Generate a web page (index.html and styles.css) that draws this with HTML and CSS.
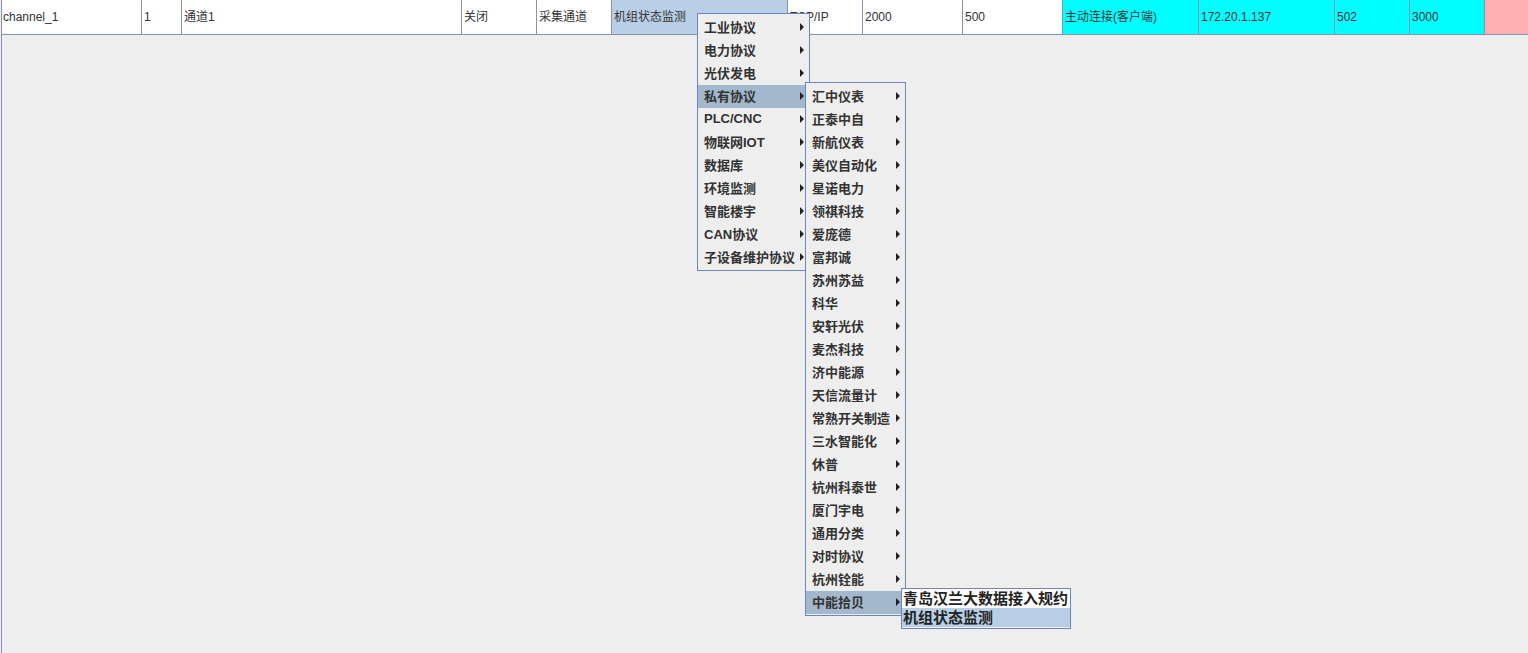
FILE: index.html
```html
<!DOCTYPE html>
<html lang="zh-CN">
<head>
    <meta charset="UTF-8">
    <title>通道配置</title>
    <link rel="stylesheet" href="styles.css">
</head>
<body>
    <div class="viewport">
        <div class="row">
            <div class="cell cell-first">channel_1</div>
            <div class="cell">1</div>
            <div class="cell">通道1</div>
            <div class="cell">关闭</div>
            <div class="cell">采集通道</div>
            <div class="cell cell-selected">机组状态监测</div>
            <div class="cell">TCP/IP</div>
            <div class="cell">2000</div>
            <div class="cell">500</div>
            <div class="cell cell-cyan">主动连接(客户端)</div>
            <div class="cell cell-cyan">172.20.1.137</div>
            <div class="cell cell-cyan">502</div>
            <div class="cell cell-cyan">3000</div>
            <div class="cell cell-pink"></div>
        </div>
    </div>

    <!-- 协议类别 -->
    <div class="popup menu-main">
        <div class="menu-item"><span>工业协议</span><i class="arrow"></i></div>
        <div class="menu-item"><span>电力协议</span><i class="arrow"></i></div>
        <div class="menu-item"><span>光伏发电</span><i class="arrow"></i></div>
        <div class="menu-item is-active"><span>私有协议</span><i class="arrow"></i></div>
        <div class="menu-item"><span>PLC/CNC</span><i class="arrow"></i></div>
        <div class="menu-item"><span>物联网IOT</span><i class="arrow"></i></div>
        <div class="menu-item"><span>数据库</span><i class="arrow"></i></div>
        <div class="menu-item"><span>环境监测</span><i class="arrow"></i></div>
        <div class="menu-item"><span>智能楼宇</span><i class="arrow"></i></div>
        <div class="menu-item"><span>CAN协议</span><i class="arrow"></i></div>
        <div class="menu-item"><span>子设备维护协议</span><i class="arrow"></i></div>
    </div>

    <!-- 厂家 -->
    <div class="popup menu-vendor">
        <div class="menu-item"><span>汇中仪表</span><i class="arrow"></i></div>
        <div class="menu-item"><span>正泰中自</span><i class="arrow"></i></div>
        <div class="menu-item"><span>新航仪表</span><i class="arrow"></i></div>
        <div class="menu-item"><span>美仪自动化</span><i class="arrow"></i></div>
        <div class="menu-item"><span>星诺电力</span><i class="arrow"></i></div>
        <div class="menu-item"><span>领祺科技</span><i class="arrow"></i></div>
        <div class="menu-item"><span>爱庞德</span><i class="arrow"></i></div>
        <div class="menu-item"><span>富邦诚</span><i class="arrow"></i></div>
        <div class="menu-item"><span>苏州苏益</span><i class="arrow"></i></div>
        <div class="menu-item"><span>科华</span><i class="arrow"></i></div>
        <div class="menu-item"><span>安轩光伏</span><i class="arrow"></i></div>
        <div class="menu-item"><span>麦杰科技</span><i class="arrow"></i></div>
        <div class="menu-item"><span>济中能源</span><i class="arrow"></i></div>
        <div class="menu-item"><span>天信流量计</span><i class="arrow"></i></div>
        <div class="menu-item"><span>常熟开关制造</span><i class="arrow"></i></div>
        <div class="menu-item"><span>三水智能化</span><i class="arrow"></i></div>
        <div class="menu-item"><span>休普</span><i class="arrow"></i></div>
        <div class="menu-item"><span>杭州科泰世</span><i class="arrow"></i></div>
        <div class="menu-item"><span>厦门宇电</span><i class="arrow"></i></div>
        <div class="menu-item"><span>通用分类</span><i class="arrow"></i></div>
        <div class="menu-item"><span>对时协议</span><i class="arrow"></i></div>
        <div class="menu-item"><span>杭州铨能</span><i class="arrow"></i></div>
        <div class="menu-item is-active"><span>中能拾贝</span><i class="arrow"></i></div>
    </div>

    <!-- 规约 -->
    <div class="popup menu-protocol">
        <div class="list-item">青岛汉兰大数据接入规约</div>
        <div class="list-item is-selected">机组状态监测</div>
    </div>
</body>
</html>
```

FILE: styles.css
```css
* {
    box-sizing: border-box;
}
body {
    margin: 0;
    height: 653px;
    overflow: hidden;
    background-color: #eeeeee;
    font-family: "Liberation Sans", Arial, "Noto Sans CJK SC", sans-serif;
    color: #333;
}
.viewport {
    margin-left: 1px;
    height: 653px;
    border-left: 1px solid #8594ae;
}
.row {
    display: grid;
    grid-template-columns: 140px 40px 280px 75px 75px 176px 75px 100px 100px 136px 136px 75px 75px 1fr;
    height: 35px;
    border-bottom: 1px solid #8594ae;
}
.cell {
    background: #fff;
    border-right: 1px solid #8594ae;
    padding-left: 2px;
    font-size: 12px;
    line-height: 34px;
    white-space: nowrap;
    overflow: hidden;
}
.cell-first {
    padding-left: 1px;
}
.cell-selected {
    background: #b8cfe5;
}
.cell-cyan {
    background: #00ffff;
}
.cell-pink {
    background: #ffafaf;
    border-right: none;
}

/* popup menus */
.popup {
    position: absolute;
    background: #eeeeee;
    border: 1px solid #6a86bf;
    padding: 2px 0 1px;
}
.menu-main {
    left: 697px;
    top: 13px;
    width: 113px;
}
.menu-vendor {
    left: 805px;
    top: 82px;
    width: 101px;
}
.menu-item {
    display: flex;
    align-items: center;
    justify-content: space-between;
    height: 23px;
    padding: 0 5px 2px 6px;
    font-size: 13px;
    font-weight: bold;
    white-space: nowrap;
}
.menu-item.is-active {
    background: #a3b8cc;
}
.arrow {
    width: 0;
    height: 0;
    border-left: 4px solid #222;
    border-top: 4px solid transparent;
    border-bottom: 4px solid transparent;
}
.menu-protocol {
    left: 901px;
    top: 588px;
    width: 170px;
    padding: 0 0 1px;
}
.list-item {
    height: 19px;
    line-height: 19px;
    padding-left: 1px;
    font-size: 15px;
    font-weight: bold;
    color: #222;
    background: #fff;
    white-space: nowrap;
    overflow: hidden;
}
.list-item.is-selected {
    background: #b8cfe5;
}
```
